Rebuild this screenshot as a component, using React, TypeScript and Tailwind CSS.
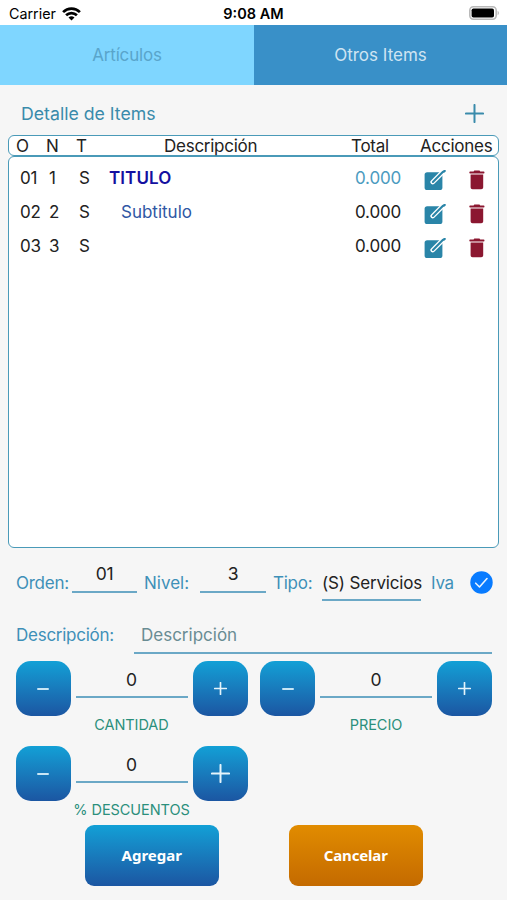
import { useState } from 'react';
import { clsx } from 'clsx';

interface Item {
  orden: string;
  nivel: number;
  tipo: string;
  descripcion: string;
  total: string;
}

const ITEMS: Item[] = [
  { orden: '01', nivel: 1, tipo: 'S', descripcion: 'TITULO', total: '0.000' },
  { orden: '02', nivel: 2, tipo: 'S', descripcion: 'Subtitulo', total: '0.000' },
  { orden: '03', nivel: 3, tipo: 'S', descripcion: '', total: '0.000' },
];

// Indentation and colour depend on the level of the item
const LEVEL_STYLES: Record<number, string> = {
  1: 'font-semibold tracking-[0.005em] text-[#1410a0]',
  2: 'pl-3 tracking-normal text-[#2f57a4]',
  3: 'pl-6 text-[#222]',
};

function WifiIcon() {
  return (
    <svg className="w-[19px] h-[14px]" viewBox="0 0 19 14" fill="none" stroke="#000" strokeWidth="2.7">
      <path d="M1.1 5.1a12 12 0 0 1 16.8 0" />
      <path d="M4.1 8.3a7.7 7.7 0 0 1 10.8 0" />
      <path d="M9.5 13.6 6.5 10.6a4.3 4.3 0 0 1 6 0z" fill="#000" stroke="none" />
    </svg>
  );
}

function BatteryIcon() {
  return (
    <svg className="w-[31px] h-[14px]" viewBox="0 0 31 14">
      <rect x="0.8" y="0.8" width="26.4" height="12.4" rx="3.6" fill="#fff" stroke="#b9b9b9" strokeWidth="1.6" />
      <rect x="2.6" y="2.4" width="22.4" height="9.2" rx="1.8" fill="#000" />
      <path d="M28.6 4.8c1.8.7 1.8 3.7 0 4.4z" fill="#b9b9b9" />
    </svg>
  );
}

function PlusIcon({ className, width = 1.6 }: { className: string; width?: number }) {
  return (
    <svg className={className} viewBox="0 0 18 18" fill="none" stroke="currentColor" strokeWidth={width} strokeLinecap="round">
      <path d="M9 .9v16.2M.9 9h16.2" />
    </svg>
  );
}

function EditIcon() {
  return (
    <svg className="w-[22px] h-[21px]" viewBox="0 0 22 21">
      <rect x="0.6" y="2.2" width="17.8" height="17.8" rx="2.6" fill="#2a85a8" />
      <path d="M8.7 12.1 18.8 2" stroke="#fff" strokeWidth="4.6" strokeLinecap="round" />
      <path d="M8.9 11.9 19 1.8" stroke="#2a85a8" strokeWidth="2.1" strokeLinecap="round" />
      <path d="M19.9 1.5 20.7.9" stroke="#2a85a8" strokeWidth="2.2" strokeLinecap="round" />
    </svg>
  );
}

function TrashIcon() {
  return (
    <svg className="w-[16px] h-[20px]" viewBox="0 0 16 20" fill="#8b1730">
      <path d="M4.6 1.6 5.3.5h5.2l.7 1.1h3.5c.5 0 .8.4.8.9s-.3.9-.8.9H1.1c-.5 0-.8-.4-.8-.9s.3-.9.8-.9z" />
      <path d="M1.6 4.5h12.6v12.7c0 1.3-.8 2-2 2H3.6c-1.2 0-2-.7-2-2z" />
    </svg>
  );
}

function Stepper({ label, bigPlus }: { label: string; bigPlus?: boolean }) {
  const [value, setValue] = useState(0);
  const button =
    'flex w-[55px] h-[55px] items-center justify-center rounded-[15px] bg-linear-to-b from-[#12a0d6] to-[#1b56a2] text-[#e4f4fb]';

  return (
    <div className="flex w-[232px] h-[85px] justify-between">
      <button className={button} onClick={() => setValue(value - 1)}>
        <span className="w-3 h-[2px] rounded-full bg-[#c9e6f5]" />
      </button>
      <div className="flex w-[112px] flex-col items-center">
        <div className="w-full h-[37px] border-b-2 border-[#6ba8c6] pt-[5px] text-center text-[17.5px] leading-7 text-[#222]">
          {value}
        </div>
        <span className="mt-[17px] text-[14.5px] leading-5 tracking-[-0.005em] whitespace-nowrap text-[#2b8f7c]">{label}</span>
      </div>
      <button className={button} onClick={() => setValue(value + 1)}>
        {bigPlus ? <PlusIcon className="w-[19px] h-[19px]" width={1.9} /> : <PlusIcon className="w-[13px] h-[13px]" width={2.3} />}
      </button>
    </div>
  );
}

export default function App() {
  const [tab, setTab] = useState('otros');

  return (
    <div className="w-[507px] h-[900px] overflow-hidden bg-[#f6f6f6] font-['Inter',sans-serif] text-[17px] text-[#222]">
      {/* Status bar */}
      <div className="grid h-[25px] grid-cols-3 items-center bg-white pt-[2px] pr-[7px] pl-[9px] text-black">
        <div className="flex items-center gap-[6px] text-[14.3px]">
          Carrier
          <WifiIcon />
        </div>
        <div className="pr-[2px] text-center text-[14.5px] font-semibold">9:08 AM</div>
        <div className="flex justify-end pb-[2px]">
          <BatteryIcon />
        </div>
      </div>

      {/* Tabs */}
      <div className="flex h-[60px] text-[17px]">
        <button className="w-[254px] bg-[#7fd6ff] pt-[2px] tracking-[-0.01em] text-[#59a5cb]" onClick={() => setTab('articulos')}>
          Artículos
        </button>
        <button
          className={clsx('flex-1 pt-[2px]', tab === 'otros' ? 'bg-[#3990c8] text-[#cfe4f2]' : 'bg-[#7fd6ff] text-[#59a5cb]')}
          onClick={() => setTab('otros')}
        >
          Otros Items
        </button>
      </div>

      <div className="flex h-[50px] items-center justify-between pt-[7px] pr-[23px] pl-[21px] text-[#3a8bab]">
        <h1 className="pt-px text-[17.7px]">Detalle de Items</h1>
        <PlusIcon className="w-[19px] h-[19px]" width={1.9} />
      </div>

      {/* Item table */}
      <div className="px-2">
        <div className="flex h-[21px] items-center rounded-[6px] border-[1.5px] border-[#4a9ab8] bg-white pt-[2px] pl-[7px] tracking-[-0.015em]">
          <span className="w-[30px]">O</span>
          <span className="w-[30px]">N</span>
          <span className="w-[88px]">T</span>
          <span className="w-[187px]">Descripción</span>
          <span className="w-[69px]">Total</span>
          <span>Acciones</span>
        </div>
        <div className="h-[392px] rounded-[6px] border-[1.5px] border-[#4a9ab8] bg-white pt-[5px] pl-[11px]">
          {ITEMS.map(item => (
            <div key={item.orden} className="flex h-[34px] items-center tracking-[-0.01em]">
              <span className="w-[29px]">{item.orden}</span>
              <span className="w-[30px]">{item.nivel}</span>
              <span className="w-[30px]">{item.tipo}</span>
              <span className={clsx('w-[246px]', LEVEL_STYLES[item.nivel])}>{item.descripcion}</span>
              <span className={clsx('w-[69px]', item.nivel === 1 && 'text-[#4b9bc0]')}>{item.total}</span>
              <button className="mt-[3px] w-[45px]">
                <EditIcon />
              </button>
              <button className="mt-px">
                <TrashIcon />
              </button>
            </div>
          ))}
        </div>
      </div>

      {/* Edit form */}
      <div className="flex h-[53px] items-start pl-4 tracking-[-0.015em] text-[#3e90b8]">
        <span className="mt-[23px] w-14 leading-6">Orden:</span>
        <div className="h-[45px] w-[65px] border-b-2 border-[#6ba8c6] pt-[12px] text-center text-[17.5px] leading-7 text-[#222]">01</div>
        <span className="mt-[23px] ml-[7px] w-14 leading-6 tracking-normal">Nivel:</span>
        <div className="h-[45px] w-[66px] border-b-2 border-[#6ba8c6] pt-[12px] text-center text-[17.5px] leading-7 text-[#222]">3</div>
        <span className="mt-[23px] ml-[7px] w-[49px] leading-6">Tipo:</span>
        <div className="h-[53px] w-[99px] border-b-2 border-[#6ba8c6] pt-[23px] leading-6 tracking-[-0.01em] whitespace-nowrap text-[#222]">
          (S) Servicios
        </div>
        <span className="mt-[23px] ml-[10px] w-[39px] leading-6">Iva</span>
        <svg className="mt-[23px] w-[23px] h-[23px]" viewBox="0 0 23 23" fill="none">
          <circle cx="11.5" cy="11.5" r="11.2" fill="#087bff" />
          <path d="m5.7 12.2 3.8 3.8 7.5-8.5" stroke="#e8f3ff" strokeWidth="1.6" strokeLinecap="round" strokeLinejoin="round" />
        </svg>
      </div>
      <div className="flex h-[53px] pr-[15px] pl-4 text-[#3e90b8]">
        <span className="mt-[22px] w-[118px] leading-6 tracking-[-0.015em]">Descripción:</span>
        <div className="flex-1 border-b-2 border-[#6ba8c6] pt-[22px] pl-[7px] leading-6 text-[#698c93]">Descripción</div>
      </div>

      <div className="mt-[7px] flex gap-[12.5px] pl-[15.5px]">
        <Stepper label="CANTIDAD" />
        <Stepper label="PRECIO" />
      </div>
      <div className="flex h-[78.5px] pl-[15.5px]">
        <Stepper label="% DESCUENTOS" bigPlus />
      </div>

      <div className="flex gap-[69.5px] pl-[84.5px] font-['Noto_Sans',sans-serif] text-[15px] font-bold text-white">
        <button className="w-[134.5px] h-[61px] rounded-[9px] bg-linear-to-b from-[#12a0d6] to-[#1b56a2] pt-px">Agregar</button>
        <button className="w-[134.5px] h-[61px] rounded-[9px] bg-linear-to-b from-[#e18c00] to-[#c46a00] pt-px tracking-[-0.01em]">
          Cancelar
        </button>
      </div>
    </div>
  );
}
